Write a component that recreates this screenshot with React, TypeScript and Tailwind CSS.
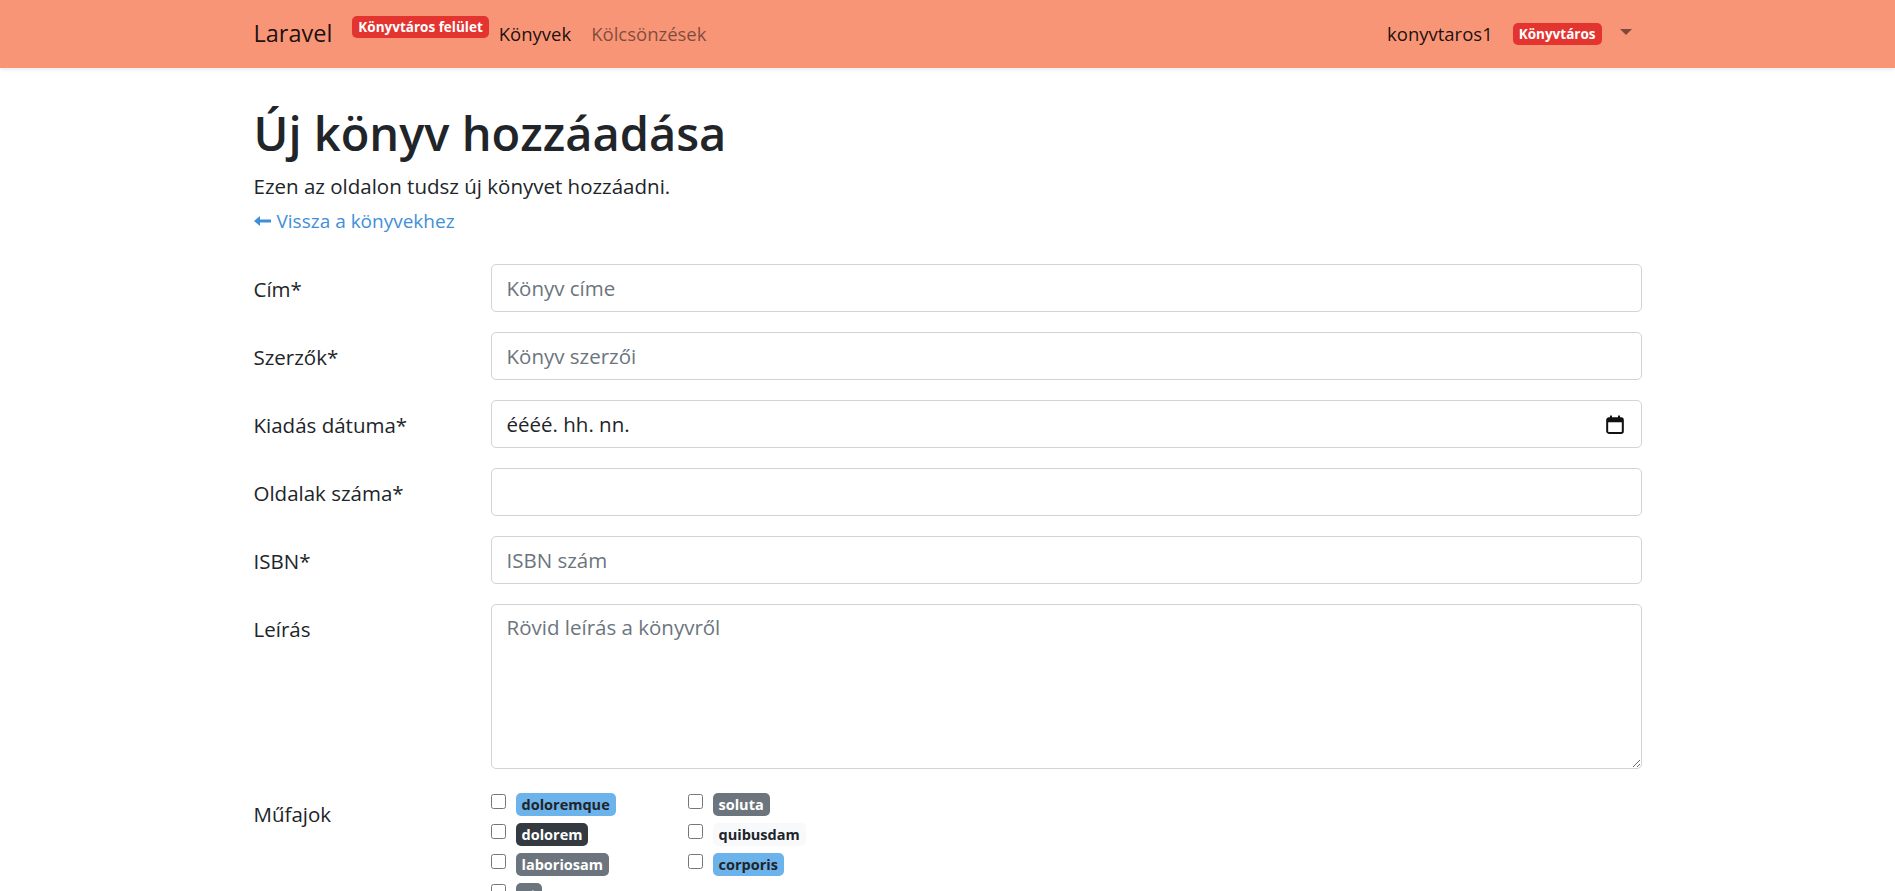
import React from "react";

const genresLeft = [
  { name: "doloremque", cls: "bg-[#6cb2eb] text-[#212529]" },
  { name: "dolorem", cls: "bg-[#343a40] text-white" },
  { name: "laboriosam", cls: "bg-[#6c757d] text-white" },
  { name: "et", cls: "bg-[#6c757d] text-white" },
];

const genresRight = [
  { name: "soluta", cls: "bg-[#6c757d] text-white" },
  { name: "quibusdam", cls: "bg-[#f8f9fa] text-[#212529]" },
  { name: "corporis", cls: "bg-[#6cb2eb] text-[#212529]" },
];

const FormRow = ({ label, children }: { label: string; children: React.ReactNode }) => {
  return (
    <div className="flex mb-[20px]">
      <label className="w-[237px] shrink-0 pt-[10px] leading-[30px]">{label}</label>
      <div className="flex-1">{children}</div>
    </div>
  );
};

const inputCls =
  "w-full h-[48px] px-[15px] border border-[#ced4da] rounded-[5px] text-[20.5px] text-[#495057] placeholder:text-[#6c757d] outline-none bg-white";

const GenreItem = ({ name, cls }: { name: string; cls: string }) => {
  return (
    <div className="flex items-center h-[30px]">
      <input type="checkbox" className="w-[15px] h-[15px] -mt-[6px] m-0 accent-[#3490dc]" />
      <span className={`ml-[10px] px-[6px] h-[23px] leading-[23px] rounded-[5px] text-[14.5px] font-bold ${cls}`}>
        {name}
      </span>
    </div>
  );
};

const App = () => {
  return (
    <div className="min-h-screen bg-white text-[#212529] text-[20.5px] font-['Open_Sans','Noto_Sans',sans-serif]">
      <nav className="h-[68px] bg-[#f89577] shadow-[0_2px_4px_rgba(0,0,0,0.075)]">
        <div className="w-[1388px] mx-auto h-full flex items-center text-[18.5px]">
          <span className="text-[23.5px] text-black/90 mr-[20px]">Laravel</span>
          <span className="bg-[#e3342f] text-white text-[13.5px] font-bold px-[6px] h-[22px] leading-[22px] rounded-[5px] -mt-[14px]">
            Könyvtáros felület
          </span>
          <span className="px-[10px] text-black/90">Könyvek</span>
          <span className="px-[10px] text-black/50">Kölcsönzések</span>
          <div className="ml-auto flex items-center">
            <span className="text-black/90">konyvtaros1</span>
            <span className="ml-[20px] bg-[#e3342f] text-white text-[13.5px] font-bold px-[6px] h-[22px] leading-[22px] rounded-[5px]">
              Könyvtáros
            </span>
            <span className="ml-[18px] mr-[10px] -mt-[4px] w-0 h-0 border-t-[6px] border-t-black/50 border-x-[6px] border-x-transparent" />
          </div>
        </div>
      </nav>

      <main className="w-[1388px] mx-auto pt-[35px]">
        <h1 className="text-[47px] leading-[60px] font-semibold mb-[8px]">Új könyv hozzáadása</h1>
        <p className="leading-[30px]">Ezen az oldalon tudsz új könyvet hozzáadni.</p>
        <a href="#" className="flex items-center mt-[5px] leading-[30px] text-[19px] text-[#3f8fd8]">
          <svg width="17" height="10" viewBox="0 0 17 10" className="mr-[6px]">
            <path d="M0 5 L6 0 L6 3.5 L17 3.5 L17 6.5 L6 6.5 L6 10 Z" fill="#3f8fd8" />
          </svg>
          Vissza a könyvekhez
        </a>

        <form className="mt-[28px]">
          <FormRow label="Cím*">
            <input className={inputCls} placeholder="Könyv címe" />
          </FormRow>
          <FormRow label="Szerzők*">
            <input className={inputCls} placeholder="Könyv szerzői" />
          </FormRow>
          <FormRow label="Kiadás dátuma*">
            <div className="w-full h-[48px] px-[15px] border border-[#ced4da] rounded-[5px] flex items-center bg-white">
              <span className="text-[#212529]">éééé. hh. nn.</span>
              <svg width="18" height="19" viewBox="0 0 16 17" className="ml-auto mr-[2px]">
                <rect x="1" y="3" width="14" height="13" rx="1.5" fill="none" stroke="#111" strokeWidth="1.8" />
                <rect x="1" y="3" width="14" height="3.5" fill="#111" />
                <rect x="3.5" y="0.5" width="1.8" height="4" fill="#111" />
                <rect x="10.7" y="0.5" width="1.8" height="4" fill="#111" />
              </svg>
            </div>
          </FormRow>
          <FormRow label="Oldalak száma*">
            <input className={inputCls} type="text" />
          </FormRow>
          <FormRow label="ISBN*">
            <input className={inputCls} placeholder="ISBN szám" />
          </FormRow>
          <FormRow label="Leírás">
            <textarea
              className="w-full h-[165px] block px-[15px] py-[7px] leading-[30px] border border-[#ced4da] rounded-[5px] text-[20.5px] placeholder:text-[#6c757d] outline-none"
              placeholder="Rövid leírás a könyvről"
            />
          </FormRow>
          <FormRow label="Műfajok">
            <div className="flex">
              <div className="w-[197px]">
                {genresLeft.map((g) => (
                  <GenreItem key={g.name} name={g.name} cls={g.cls} />
                ))}
              </div>
              <div className="w-[197px]">
                {genresRight.map((g) => (
                  <GenreItem key={g.name} name={g.name} cls={g.cls} />
                ))}
              </div>
            </div>
          </FormRow>
        </form>
      </main>
    </div>
  );
};

export default App;
